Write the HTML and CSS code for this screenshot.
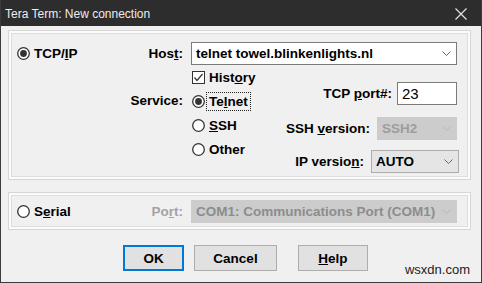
FILE: index.html
```html
<!DOCTYPE html>
<html>
<head>
<meta charset="utf-8">
<link rel="stylesheet" href="styles.css">
</head>
<body>
<div class="window">
  <div class="titlebar">
    <span class="title">Tera Term: New connection</span>
    <svg class="close" width="12" height="12" viewBox="0 0 12 12"><path d="M0.5 0.5 L11.5 11.5 M11.5 0.5 L0.5 11.5" stroke="#e8e8e8" stroke-width="1.1" fill="none"/></svg>
  </div>
  <div class="body">
    <div class="group tcp">
      <div class="split">
        <div class="choice">
          <svg class="radio" width="13" height="13" viewBox="0 0 13 13"><circle cx="6.5" cy="6.5" r="5.8" fill="#fff" stroke="#333" stroke-width="1.3"/><circle cx="6.5" cy="6.5" r="3.4" fill="#333"/></svg>
          <span>TCP/<u>I</u>P</span>
        </div>
        <span class="lbl">Hos<u>t</u>:</span>
      </div>
      <div class="combo host">
        <span>telnet towel.blinkenlights.nl</span>
        <svg class="chev" width="9" height="5" viewBox="0 0 9 5"><polyline points="0.5,0.5 4.5,4.5 8.5,0.5" fill="none" stroke="#666" stroke-width="1"/></svg>
      </div>
      <div class="lbl service">Service:</div>
      <div class="options">
        <div class="leftcol">
          <div class="choice opt">
            <svg class="check" width="13" height="13" viewBox="0 0 13 13"><rect x="0.5" y="0.5" width="12" height="12" fill="#fff" stroke="#333"/><polyline points="2.5,6.5 5,9.5 10.5,3" fill="none" stroke="#333" stroke-width="1.2"/></svg>
            <span>Hist<u>o</u>ry</span>
          </div>
          <div class="choice opt">
            <svg class="radio" width="13" height="13" viewBox="0 0 13 13"><circle cx="6.5" cy="6.5" r="5.8" fill="#fff" stroke="#333" stroke-width="1.3"/><circle cx="6.5" cy="6.5" r="3.4" fill="#333"/></svg>
            <span class="focus">Te<u>l</u>net</span>
          </div>
          <div class="choice opt">
            <svg class="radio" width="13" height="13" viewBox="0 0 13 13"><circle cx="6.5" cy="6.5" r="5.8" fill="#fff" stroke="#333" stroke-width="1.3"/></svg>
            <span><u>S</u>SH</span>
          </div>
          <div class="choice opt">
            <svg class="radio" width="13" height="13" viewBox="0 0 13 13"><circle cx="6.5" cy="6.5" r="5.8" fill="#fff" stroke="#333" stroke-width="1.3"/></svg>
            <span>Other</span>
          </div>
        </div>
        <div class="rightcol">
          <div class="field f-port">
            <span class="lbl">TCP <u>p</u>ort#:</span>
            <div class="input port">23</div>
          </div>
          <div class="field f-ssh">
            <span class="lbl">SSH <u>v</u>ersion:</span>
            <div class="combo disabled ssh">
              <span>SSH2</span>
              <svg class="chev" width="9" height="5" viewBox="0 0 9 5"><polyline points="0.5,0.5 4.5,4.5 8.5,0.5" fill="none" stroke="#b8b8b8" stroke-width="1"/></svg>
            </div>
          </div>
          <div class="field f-ip">
            <span class="lbl">IP versio<u>n</u>:</span>
            <div class="combo select ip">
              <span>AUTO</span>
              <svg class="chev" width="9" height="5" viewBox="0 0 9 5"><polyline points="0.5,0.5 4.5,4.5 8.5,0.5" fill="none" stroke="#666" stroke-width="1"/></svg>
            </div>
          </div>
        </div>
      </div>
    </div>

    <div class="group serial">
      <div class="split">
        <div class="choice">
          <svg class="radio" width="13" height="13" viewBox="0 0 13 13"><circle cx="6.5" cy="6.5" r="5.8" fill="#fff" stroke="#333" stroke-width="1.3"/></svg>
          <span>S<u>e</u>rial</span>
        </div>
        <span class="lbl dim">Po<u>r</u>t:</span>
      </div>
      <div class="combo disabled com">
        <span>COM1: Communications Port (COM1)</span>
        <svg class="chev" width="9" height="5" viewBox="0 0 9 5"><polyline points="0.5,0.5 4.5,4.5 8.5,0.5" fill="none" stroke="#b8b8b8" stroke-width="1"/></svg>
      </div>
    </div>

    <div class="buttons">
      <div class="btn default ok">OK</div>
      <div class="btn cancel">Cancel</div>
      <div class="btn help"><u>H</u>elp</div>
    </div>
  </div>
  <div class="watermark">wsxdn.com</div>
</div>
</body>
</html>
```

FILE: styles.css
```css
html, body {
  margin: 0;
  padding: 0;
  background: #f0f0f0;
}

.window {
  position: relative;
  width: 482px;
  height: 283px;
  box-sizing: border-box;
  border: 1px solid #3c3c3c;
  border-top: none;
  background: #f0f0f0;
  overflow: hidden;
  font-family: "Liberation Sans", Arial, sans-serif;
  font-weight: bold;
  font-size: 13.5px;
  color: #000;
}

.titlebar {
  height: 26px;
  margin: 0 -1px;
  background: #2d2d2d;
  display: flex;
  align-items: center;
  justify-content: space-between;
  padding: 0 15px 0 5px;
}

.title {
  font-weight: normal;
  font-size: 12px;
  color: #ececec;
  padding-top: 1px;
}

.close {
  display: block;
  margin-top: 1px;
}

.body {
  padding: 4px 0 0 7px;
}

.group {
  width: 463px;
  box-sizing: border-box;
  border: 1px solid #d6d6d6;
  box-shadow: inset 0 0 0 2px #fbfbfb, inset 0 0 0 3px #dedede;
  display: grid;
  grid-template-columns: 178px 266px;
  column-gap: 4px;
}

.tcp {
  height: 150px;
  padding-top: 11px;
  grid-template-rows: 23px 96px;
}

.serial {
  margin-top: 12px;
  height: 38px;
  padding-top: 7px;
  grid-template-rows: 23px;
}

.split {
  display: flex;
  align-items: center;
  justify-content: space-between;
  padding: 0 4px 0 8px;
}

.choice {
  display: flex;
  align-items: center;
  gap: 4px;
}

.choice svg {
  display: block;
  flex: none;
}

.lbl {
  white-space: nowrap;
}

.dim {
  color: #a3a3a3;
}

.service {
  grid-column: 1;
  grid-row: 2;
  text-align: right;
  padding: 0 4px 0 0;
  margin-top: 24px;
  height: 24px;
  line-height: 24px;
}

.combo, .input {
  box-sizing: border-box;
  height: 23px;
  display: flex;
  align-items: center;
  justify-content: space-between;
  padding: 0 5px 0 4px;
  white-space: nowrap;
}

.host {
  background: #fff;
  border: 1px solid #7a7a7a;
}

.options {
  grid-column: 2;
  grid-row: 2;
  display: flex;
  justify-content: space-between;
}

.leftcol {
  display: flex;
  flex-direction: column;
  padding-left: 1px;
}

.opt {
  height: 24px;
}

.focus {
  outline: 1px dotted #222;
  outline-offset: 1px;
  padding: 0 1px;
  margin-left: -1px;
}

.rightcol {
  display: flex;
  flex-direction: column;
  align-items: flex-end;
}

.field {
  display: flex;
  align-items: center;
  gap: 6px;
}

.f-port {
  margin-top: 17px;
  gap: 5px;
}

.f-ssh {
  margin-top: 12px;
  gap: 7px;
}

.f-ip {
  margin-top: 10px;
  gap: 7px;
  margin-right: -2px;
}

.input {
  background: #fff;
  border: 1px solid #7a7a7a;
  font-weight: normal;
  font-size: 15px;
}

.port {
  width: 60px;
}

.disabled {
  background: #cccccc;
  border: 1px solid #cccccc;
  color: #9d9d9d;
}

.ssh {
  width: 80px;
}

.select {
  background: #e5e5e5;
  border: 1px solid #adadad;
}

.ip {
  width: 88px;
}

.com {
  color: #8c8c8c;
}

.buttons {
  display: flex;
  margin-top: 15px;
  padding-left: 115px;
}

.btn {
  box-sizing: border-box;
  height: 26px;
  display: flex;
  align-items: center;
  justify-content: center;
  background: #e1e1e1;
  border: 1px solid #adadad;
}

.default {
  border: 2px solid #0078d7;
}

.ok {
  width: 61px;
}

.cancel {
  width: 83px;
  margin-left: 10px;
}

.help {
  width: 70px;
  margin-left: 21px;
}

.watermark {
  position: absolute;
  right: 11px;
  bottom: 5px;
  font-weight: normal;
  font-size: 13px;
  color: #222;
}
```
